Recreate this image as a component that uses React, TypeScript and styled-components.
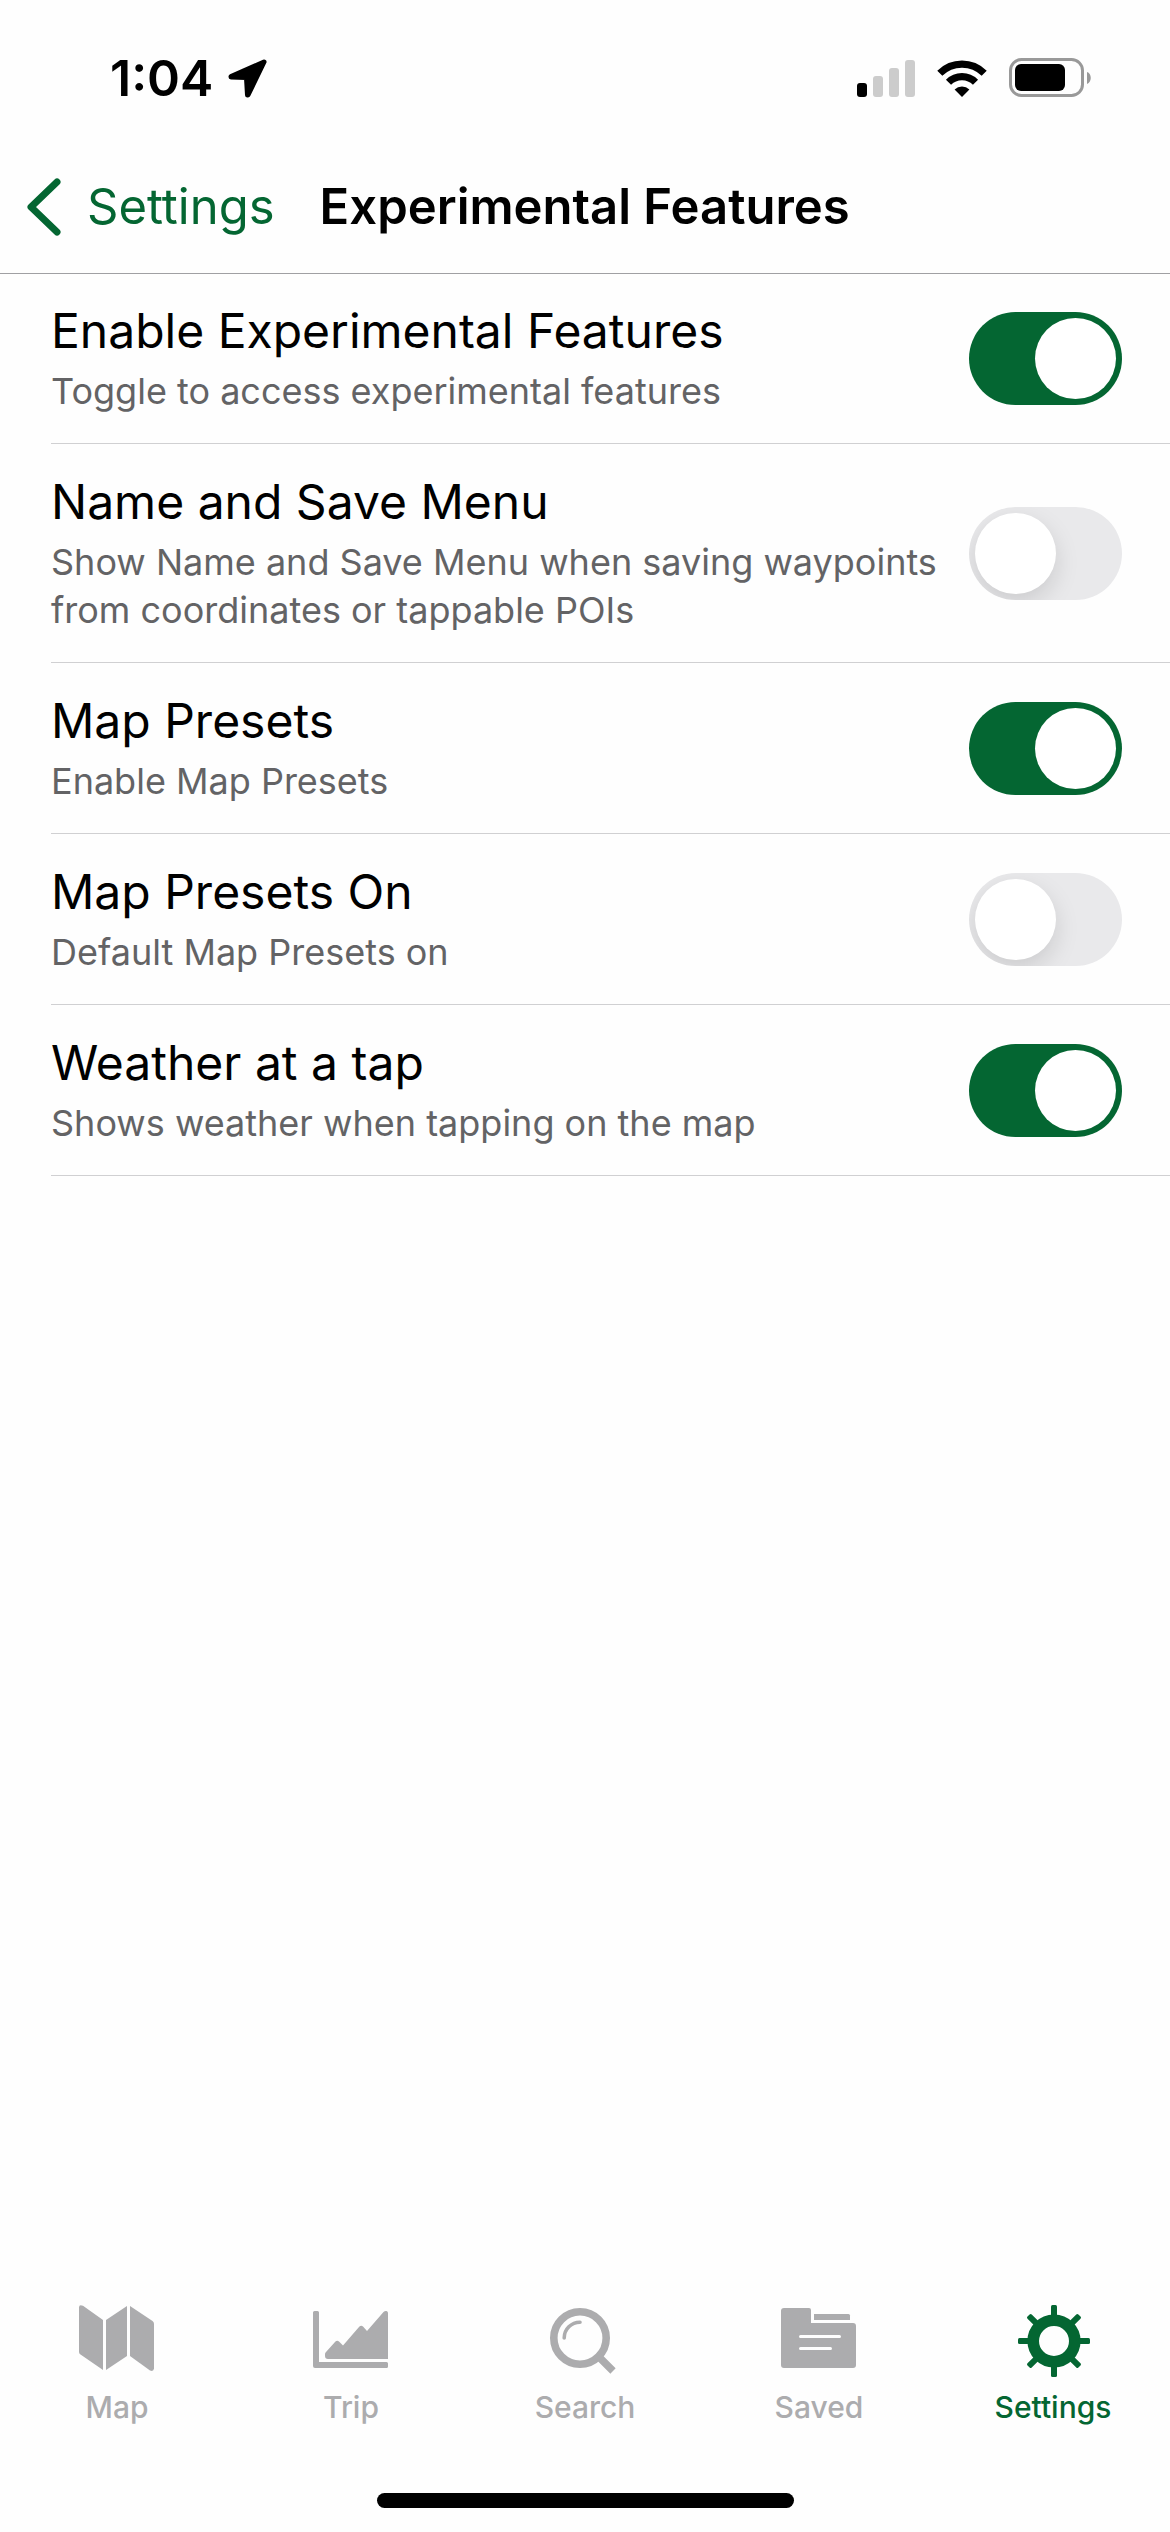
import React, { useState } from "react";
import styled, { createGlobalStyle } from "styled-components";

const GREEN = "#046632";
const MUTED = "#acacae";

const GlobalStyle = createGlobalStyle`
  *, *::before, *::after { box-sizing: border-box; }
  body {
    margin: 0;
    background: #fefefe;
    color: #000;
    font-family: Inter, "Liberation Sans", sans-serif;
  }
`;

const Screen = styled.div`
  display: flex;
  flex-direction: column;
  min-height: 100vh;
`;

const StatusBar = styled.div`
  display: flex;
  align-items: center;
  justify-content: space-between;
  padding: 48px 78px 48px 110px;
`;

const StatusGroup = styled.div`
  display: flex;
  align-items: center;
  gap: ${(p: { $gap: number }) => p.$gap}px;
`;

const Time = styled.time`
  font-size: 50px;
  line-height: 60px;
  font-weight: 600;
`;

const Icon = styled.svg`
  display: block;
  flex: none;
`;

const NavBar = styled.header`
  display: flex;
  align-items: center;
  gap: 45px;
  padding: 21px 27px 36px;
  border-bottom: 1px solid #a0a0a3;
`;

const BackLink = styled.a`
  display: flex;
  align-items: center;
  gap: 26px;
  color: ${GREEN};
  font-size: 49px;
  line-height: 60px;
  text-decoration: none;
`;

const NavTitle = styled.h1`
  margin: 0;
  font-size: 49px;
  line-height: 60px;
  font-weight: 600;
`;

const Main = styled.main`
  flex: 1;
`;

/* The list tucks under the navigation bar's hairline. */
const List = styled.ul`
  margin: -1px 0 0;
  padding: 0 0 0 51px;
  list-style: none;
`;

const Row = styled.li`
  display: flex;
  align-items: center;
  justify-content: space-between;
  gap: 32px;
  padding: 28px 48px 28px 0;
  border-bottom: 1px solid #d0d0d2;
`;

const RowText = styled.div`
  display: flex;
  flex-direction: column;
  gap: 6px;
`;

const RowTitle = styled.label`
  font-size: 48px;
  line-height: 60px;
`;

const RowDetail = styled.p`
  margin: 0;
  color: #636365;
  font-size: 36px;
  line-height: 48px;
`;

const Switch = styled.input`
  appearance: none;
  flex: none;
  display: flex;
  width: 153px;
  height: 93px;
  margin: 0;
  padding: 6px;
  border-radius: 47px;
  background: #e9e9eb;
  overflow: hidden;
  cursor: pointer;

  &::before {
    content: "";
    width: 81px;
    height: 81px;
    border-radius: 50%;
    background: #fff;
    box-shadow: 0 9px 24px rgba(0, 0, 0, 0.13);
  }

  &:checked {
    justify-content: flex-end;
    background: ${GREEN};
  }

  &:checked::before {
    box-shadow: none;
  }
`;

const TabBar = styled.nav`
  display: grid;
  grid-template-columns: repeat(5, 1fr);
  padding-bottom: 68px;
`;

const Tab = styled.a<{ $active?: boolean }>`
  display: flex;
  flex-direction: column;
  align-items: center;
  gap: 12px;
  color: ${(p) => (p.$active ? GREEN : MUTED)};
  font-size: 30px;
  line-height: 36px;
  font-weight: 500;
  text-decoration: none;
`;

const HomeIndicator = styled.div`
  width: 417px;
  height: 15px;
  margin: 0 auto 24px;
  border-radius: 8px;
  background: #000;
`;

const LocationIcon = () => (
  <Icon width="39" height="39" viewBox="0 0 39 39" aria-hidden="true">
    <path
      d="M36 3 3 17.5V18l15 .5.5.5L19.5 36h.5Z"
      fill="currentColor"
      stroke="currentColor"
      strokeWidth="5"
      strokeLinejoin="round"
    />
  </Icon>
);

const SignalIcon = () => (
  <Icon width="58" height="38" viewBox="0 0 58 38" aria-hidden="true">
    <rect x="0" y="24" width="10" height="14" rx="3" />
    <g fill="#cccccc">
      <rect x="16" y="17" width="10" height="21" rx="3" />
      <rect x="32" y="9" width="10" height="29" rx="3" />
      <rect x="48" y="1" width="10" height="37" rx="3" />
    </g>
  </Icon>
);

const WifiIcon = () => (
  <Icon width="50" height="38" viewBox="0 0 50 38" aria-hidden="true">
    <g fill="none" stroke="#000" strokeWidth="7.2">
      <path d="M2.8 14.200a31.5 31.5 0 0 1 44.4 0" />
      <path d="M11.5 23.200a19 19 0 0 1 27 0" />
    </g>
    <path d="M25 38 17.6 30.500a10.5 10.5 0 0 1 14.8 0Z" />
  </Icon>
);

const BatteryIcon = () => (
  <Icon width="83" height="40" viewBox="0 0 83 40" aria-hidden="true">
    <rect x="1.5" y="1.5" width="72" height="36" rx="11" fill="none" stroke="#999" strokeWidth="3" />
    <rect x="6" y="6" width="50" height="27" rx="6" />
    <path d="M78 14c5 1.500 5 10 0 12Z" fill="#999" />
  </Icon>
);

const ChevronIcon = () => (
  <Icon width="34" height="58" viewBox="0 0 34 58" aria-hidden="true">
    <path d="M30 4 4 29l26 25" fill="none" stroke="currentColor" strokeWidth="7" strokeLinecap="round" strokeLinejoin="round" />
  </Icon>
);

const TabIcon = ({ children }: { children: React.ReactNode }) => (
  <Icon width="78" height="72" viewBox="0 0 78 72" fill="currentColor" aria-hidden="true">
    {children}
  </Icon>
);

const MapIcon = () => (
  <TabIcon>
    <path d="M1 2.500Q1-1 5 .8L25 15v50L2.500 49.500Q1 48.500 1 47Z" />
    <path d="M28 15 49 1v50L28 65Z" />
    <path d="M52 1 74.500 16Q76 17 76 19v44.500q-.5 3.500-4 2L52 51Z" />
  </TabIcon>
);

const TripIcon = () => (
  <TabIcon>
    <path d="M2.500 6h3Q7 6 7 7.500V57h67.500q1.500 0 1.500 1.500v3q0 1.500-1.500 1.500H3q-2 0-2-2V7.500Q1 6 2.500 6Z" />
    <path d="M76 54H16q-3 0-3-3v-2q0-1 1-2l9-10q2-2 4-.5l4 4L47 22q2-2 4-.5l4 4.500L71.500 7Q73 5.500 74.500 6T76 8Z" />
  </TabIcon>
);

const SearchIcon = () => (
  <TabIcon>
    <g fill="none" stroke="currentColor">
      <circle cx="34" cy="33" r="26.2" strokeWidth="7.6" />
      <path d="M18.200 33A15.800 15.800 0 0 1 34 17.200" strokeWidth="3.6" strokeLinecap="round" />
      <path d="M52 51 67 66" strokeWidth="7.5" />
    </g>
  </TabIcon>
);

const SavedIcon = () => (
  <TabIcon>
    <path d="M4 3h25q2 0 2 2v13h42q3 0 3 3v39q0 3-3 3H4q-3 0-3-3V6q0-3 3-3Z" />
    <path d="M34 9h34.500q1.500 0 1.500 1.500V15H34Z" />
    <path d="M20.500 31.500h39M20.500 43.500h30" fill="none" stroke="#fefefe" strokeWidth="3" strokeLinecap="round" />
  </TabIcon>
);

const SettingsIcon = () => (
  <TabIcon>
    <circle cx="40" cy="36" r="20.8" fill="none" stroke="currentColor" strokeWidth="11.6" />
    {[0, 45, 90, 135, 180, 225, 270, 315].map((angle) => (
      <rect key={angle} x="37" y="0" width="6" height="12" rx="1.5" transform={`rotate(${angle} 40 36)`} />
    ))}
  </TabIcon>
);

const features = [
  { id: "experimental", title: "Enable Experimental Features", detail: "Toggle to access experimental features", on: true },
  {
    id: "name-save",
    title: "Name and Save Menu",
    detail: "Show Name and Save Menu when saving waypoints from coordinates or tappable POIs",
    on: false,
  },
  { id: "presets", title: "Map Presets", detail: "Enable Map Presets", on: true },
  { id: "presets-on", title: "Map Presets On", detail: "Default Map Presets on", on: false },
  { id: "weather", title: "Weather at a tap", detail: "Shows weather when tapping on the map", on: true },
];

const tabs = [
  { label: "Map", Glyph: MapIcon },
  { label: "Trip", Glyph: TripIcon },
  { label: "Search", Glyph: SearchIcon },
  { label: "Saved", Glyph: SavedIcon },
  { label: "Settings", Glyph: SettingsIcon, active: true },
];

const FeatureRow = ({ id, title, detail, on }: (typeof features)[number]) => {
  const [checked, setChecked] = useState(on);
  return (
    <Row>
      <RowText>
        <RowTitle htmlFor={id}>{title}</RowTitle>
        <RowDetail id={`${id}-detail`}>{detail}</RowDetail>
      </RowText>
      <Switch
        type="checkbox"
        role="switch"
        id={id}
        aria-describedby={`${id}-detail`}
        checked={checked}
        onChange={(e) => setChecked(e.target.checked)}
      />
    </Row>
  );
};

export default function App() {
  return (
    <Screen>
      <GlobalStyle />
      <StatusBar>
        <StatusGroup $gap={15}>
          <Time>1:04</Time>
          <LocationIcon />
        </StatusGroup>
        <StatusGroup $gap={22}>
          <SignalIcon />
          <WifiIcon />
          <BatteryIcon />
        </StatusGroup>
      </StatusBar>
      <NavBar>
        <BackLink href="#settings">
          <ChevronIcon />
          Settings
        </BackLink>
        <NavTitle>Experimental Features</NavTitle>
      </NavBar>
      <Main>
        <List>
          {features.map((feature) => (
            <FeatureRow key={feature.id} {...feature} />
          ))}
        </List>
      </Main>
      <TabBar aria-label="Main">
        {tabs.map(({ label, Glyph, active }) => (
          <Tab key={label} href={`#${label.toLowerCase()}`} $active={active} aria-current={active ? "page" : undefined}>
            <Glyph />
            {label}
          </Tab>
        ))}
      </TabBar>
      <HomeIndicator />
    </Screen>
  );
}
